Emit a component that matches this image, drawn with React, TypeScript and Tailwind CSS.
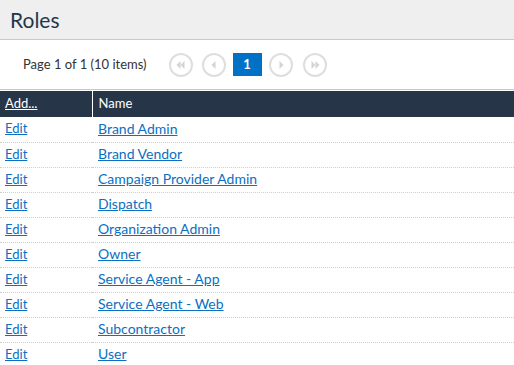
import React from 'react';

const roles = [
  'Brand Admin',
  'Brand Vendor',
  'Campaign Provider Admin',
  'Dispatch',
  'Organization Admin',
  'Owner',
  'Service Agent - App',
  'Service Agent - Web',
  'Subcontractor',
  'User',
];

const PagerCircle: React.FC<{ kind: 'first' | 'prev' | 'next' | 'last' }> = ({ kind }) => (
  <div className="w-[24px] h-[24px] rounded-full border-2 border-[#dedede] flex items-center justify-center">
    <svg width="12" height="10" viewBox="0 0 12 10" className="fill-[#d4d4d4]">
      {kind === 'first' && (
        <>
          <path d="M5.5 1 L1.5 5 L5.5 9 Z" />
          <path d="M9.5 1 L5.5 5 L9.5 9 Z" />
        </>
      )}
      {kind === 'prev' && <path d="M7.5 1 L3.5 5 L7.5 9 Z" />}
      {kind === 'next' && <path d="M4.5 1 L8.5 5 L4.5 9 Z" />}
      {kind === 'last' && (
        <>
          <path d="M2.5 1 L6.5 5 L2.5 9 Z" />
          <path d="M6.5 1 L10.5 5 L6.5 9 Z" />
        </>
      )}
    </svg>
  </div>
);

export default function App() {
  return (
    <div className="w-[514px] h-[365px] overflow-hidden bg-white font-['Lato',sans-serif] text-[13px]">
      <div className="h-[40px] bg-[#efefef] border-b border-[#c9c9c9] flex items-center px-[10px]">
        <h1 className="text-[21px] text-[#25364a] leading-none">Roles</h1>
      </div>
      <div className="h-[50px] border-b border-[#c9c9c9] flex items-center pl-[23px]">
        <span className="text-[#333] text-[13px] mr-[22px]">Page 1 of 1 (10 items)</span>
        <div className="flex items-center">
          <PagerCircle kind="first" />
          <div className="ml-[9px]">
            <PagerCircle kind="prev" />
          </div>
          <div className="ml-[7px] w-[29px] h-[23px] bg-[#0071c5] text-white flex items-center justify-center text-[13px] font-bold">1</div>
          <div className="ml-[7px]">
            <PagerCircle kind="next" />
          </div>
          <div className="ml-[10px]">
            <PagerCircle kind="last" />
          </div>
        </div>
      </div>
      <table className="w-full border-collapse mt-px">
        <thead>
          <tr className="bg-[#263548] text-white h-[26px]">
            <th className="w-[92px] text-left font-normal pl-[5px] border-r border-white">
              <a className="underline text-white">Add...</a>
            </th>
            <th className="text-left font-normal pl-[6px]">Name</th>
          </tr>
        </thead>
        <tbody>
          {roles.map((r, i) => (
            <tr key={r} className={`h-[25px] leading-none ${i < roles.length - 1 ? 'border-b border-dotted border-[#cfcfcf]' : ''}`}>
              <td className="pl-[5px] pb-px">
                <a className="underline text-[#0b6fc2]">Edit</a>
              </td>
              <td className="pl-[6px] pb-px">
                <a className="underline text-[#0b6fc2] text-[14px]">{r}</a>
              </td>
            </tr>
          ))}
        </tbody>
      </table>
    </div>
  );
}
